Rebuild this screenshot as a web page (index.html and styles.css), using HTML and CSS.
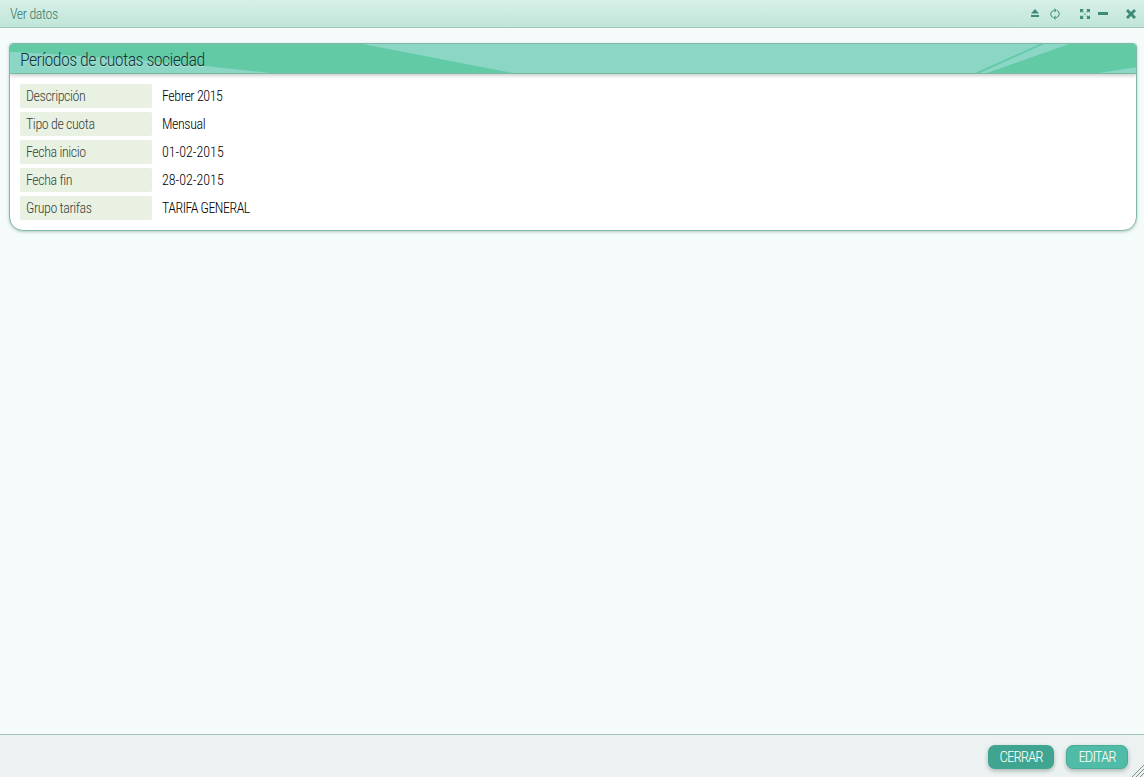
FILE: index.html
```html
<!DOCTYPE html>
<html lang="es">
<head>
<meta charset="utf-8">
<title>Ver datos</title>
<link rel="stylesheet" href="styles.css">
</head>
<body>
<div class="window">
  <header class="titlebar">
    <span class="title">Ver datos</span>
    <div class="tools">
      <svg class="ico eject" viewBox="0 0 8 9"><path d="M4 0 8 4.5H0Z"/><rect y="6" width="8" height="2"/></svg>
      <svg class="ico sync" viewBox="0 0 10 12"><path d="M3 9.6A3.8 3.8 0 0 1 3.8 2.4M7 2.4A3.8 3.8 0 0 1 6.2 9.6" fill="none" stroke-width="1"/><path d="M4.4 0 6.6 2.4 4.4 4.6ZM5.6 7.4 3.4 9.6 5.6 12Z"/></svg>
      <svg class="ico expand" viewBox="0 0 10 10"><path d="M0 0H3.8L2.6 1.2 3.6 2.2 2.2 3.6 1.2 2.6 0 3.8ZM10 0V3.8L8.8 2.6 7.8 3.6 6.4 2.2 7.4 1.2 6.2 0ZM0 10V6.2L1.2 7.4 2.2 6.4 3.6 7.8 2.6 8.8 3.8 10ZM10 10H6.2L7.4 8.8 6.4 7.8 7.8 6.4 8.8 7.4 10 6.2Z"/><path class="expand-core" d="M3.8 3.8 4.4 4.4M6.2 3.8 5.6 4.4M3.8 6.2 4.4 5.6M6.2 6.2 5.6 5.6"/></svg>
      <svg class="ico minus" viewBox="0 0 10 3"><rect width="10" height="3"/></svg>
      <svg class="ico close" viewBox="0 0 10 10"><path d="M2 0 5 3 8 0 10 2 7 5 10 8 8 10 5 7 2 10 0 8 3 5 0 2Z"/></svg>
    </div>
  </header>
  <main class="content">
    <section class="panel">
      <div class="panel-head">
        <svg class="panel-art" viewBox="0 0 1126 30" preserveAspectRatio="none">
          <path class="light" d="M353 0H1059L977 30H503Z"/>
          <path class="green" d="M1034 0H1030L965 30H970Z"/>
          <path class="light" d="M0 8C70 12 170 19 259 30H0Z"/>
          <path class="light" d="M1089 30 1126 24V30Z"/>
        </svg>
        <h1 class="panel-title">Períodos de cuotas sociedad</h1>
      </div>
      <dl class="rows">
        <div class="row"><dt>Descripción</dt><dd>Febrer 2015</dd></div>
        <div class="row"><dt>Tipo de cuota</dt><dd>Mensual</dd></div>
        <div class="row"><dt>Fecha inicio</dt><dd><span class="num">01-02-2015</span></dd></div>
        <div class="row"><dt>Fecha fin</dt><dd><span class="num">28-02-2015</span></dd></div>
        <div class="row"><dt>Grupo tarifas</dt><dd><span class="caps">TARIFA GENERAL</span></dd></div>
      </dl>
    </section>
  </main>
  <footer class="footer">
    <button class="btn btn-close" type="button">CERRAR</button>
    <button class="btn btn-edit" type="button">EDITAR</button>
    <svg class="grip" viewBox="0 0 12 12"><path d="M0 12 12 0M4 12 12 4M8 12 12 8"/></svg>
  </footer>
</div>
</body>
</html>
```
FILE: styles.css
```css
* { box-sizing: border-box; }
html, body { height: 100%; }
body {
  margin: 0;
  font-family: "Roboto Condensed", "Liberation Sans Narrow", "Liberation Sans", sans-serif;
  font-size: 14px;
  font-weight: 300;
  letter-spacing: -0.42px;
  background: #f4fbfa;
  overflow: hidden;
}
.window { display: flex; flex-direction: column; height: 777px; }
.titlebar {
  display: flex;
  align-items: center;
  justify-content: space-between;
  height: 28px;
  padding: 0 7px 0 10px;
  background: linear-gradient(#d8f0e7, #bfe6d8);
  border-bottom: 1px solid #a3c4bb;
  flex: none;
}
.title { color: #3a7a6c; font-size: 14px; }
.tools { display: flex; align-items: center; height: 100%; width: 106px; }
.ico { display: block; fill: #3d8a7a; stroke: #3d8a7a; stroke-width: 0; flex: none; }
.eject { width: 8px; height: 9px; }
.sync { width: 10px; height: 12px; margin-left: 11px; }
.expand { width: 10px; height: 10px; margin-left: 20px; }
.expand-core { fill: none; stroke-width: 1; }
.minus { width: 10px; height: 3px; margin-left: 8px; }
.close { width: 10px; height: 10px; margin-left: 18px; }
.content { flex: 1; padding: 15px 7px 0 9px; min-height: 0; }
.panel {
  height: 188px;
  background: #fff;
  border: 1px solid #7fb8a8;
  border-radius: 4px 4px 14px 14px;
  box-shadow: 0 1px 3px rgba(70, 110, 100, .35);
  overflow: hidden;
}
.panel-head {
  position: relative;
  height: 30px;
  background: #62cba6;
  box-shadow: 0 2px 3px rgba(90, 110, 100, .3);
  border-bottom: 1px solid #7fb8a0;
}
.panel-art { position: absolute; inset: 0; width: 100%; height: 100%; display: block; }
.light { fill: #8cd6c6; }
.green { fill: #62cba6; }
.panel-title {
  position: relative;
  margin: 0;
  padding: 0 10px;
  font-size: 18px;
  letter-spacing: -0.62px;
  line-height: 31px;
  font-weight: 300;
  color: #0f3532;
  text-shadow: 0 1px 1px rgba(255, 255, 255, .35);
}
.rows { margin: 0; padding: 10px 10px 0; }
.row { display: flex; align-items: center; height: 24px; margin-bottom: 4px; }
dt {
  width: 132px;
  height: 24px;
  padding-left: 6px;
  line-height: 24px;
  background: #e9f1e2;
  border-radius: 2px;
  color: #37443b;
}
dd { margin: 0 0 0 10px; color: #000; }
.num { letter-spacing: 0; }
.caps { letter-spacing: -0.5px; }
.footer {
  position: relative;
  display: flex;
  justify-content: flex-end;
  align-items: flex-start;
  gap: 12px;
  flex: none;
  height: 43px;
  padding: 10px 16px 0 0;
  background: #ecf2f1;
  border-top: 1px solid #a3c4bb;
}
.btn {
  height: 24px;
  padding: 0;
  border: 0;
  border-radius: 7px;
  font: 300 15px "Roboto Condensed", "Liberation Sans", sans-serif;
  letter-spacing: -1px;
  color: #fff;
  box-shadow: 0 2px 4px rgba(70, 90, 85, .4);
}
.btn-close { width: 66px; background: #40a590; }
.btn-edit { width: 62px; background: #50bba6; border: 1px solid #48ad98; }
.grip { position: absolute; right: 0; bottom: 0; width: 12px; height: 12px; fill: none; stroke: #7a8d8a; stroke-width: 1; }
```
